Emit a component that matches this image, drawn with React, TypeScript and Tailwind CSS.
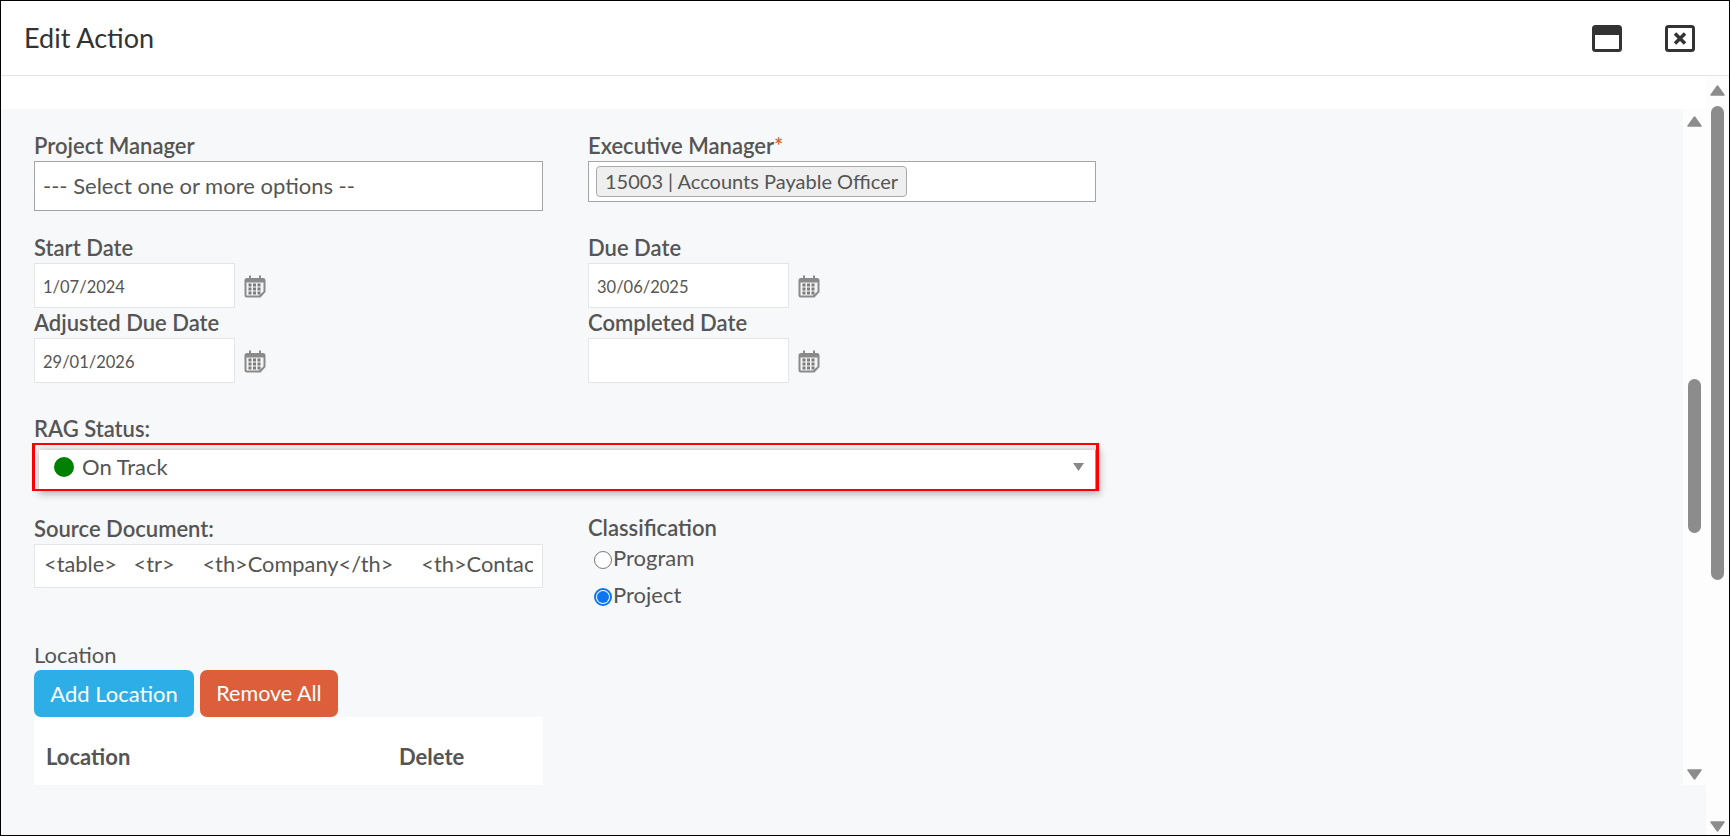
import React from "react";

const labelClass = "block h-[22px] leading-[22px] text-[22px] font-semibold text-[#555]";

const CalendarIcon = () => (
  <svg width="22" height="23" viewBox="0 0 22 23" className="ml-[9px] mt-[2px] shrink-0">
    <path d="M3 3h16a2.500 2.500 0 0 1 2.500 2.500V17l-5 5.500H3A2.500 2.500 0 0 1 .5 20V5.500A2.500 2.500 0 0 1 3 3z" fill="#8a8a8a" />
    <rect x="5" y="0.5" width="2" height="4" fill="#8a8a8a" />
    <rect x="15" y="0.5" width="2" height="4" fill="#8a8a8a" />
    <path d="M2.500 7.500h17v9l-4.500 4h-12.500z" fill="#f4f4f4" />
    {[9, 13, 17].map((y) =>
      [4.5, 9, 13.5].map((x) => <rect key={`${x}-${y}`} x={x} y={y - 0.5} width="3" height="3" fill="#7c7c7c" />)
    )}
  </svg>
);

const ScrollUp = () => (
  <svg width="15" height="11" viewBox="0 0 15 11">
    <path d="M7.500 1L14 10H1z" fill="#8c8c8c" stroke="#8c8c8c" strokeWidth="1.500" strokeLinejoin="round" />
  </svg>
);

const ScrollDown = () => (
  <svg width="15" height="11" viewBox="0 0 15 11">
    <path d="M7.500 10L14 1H1z" fill="#8c8c8c" stroke="#8c8c8c" strokeWidth="1.500" strokeLinejoin="round" />
  </svg>
);

const DateField = ({ label, value }: { label: string; value?: string }) => (
  <div>
    <label className={labelClass}>{label}</label>
    <div className="mt-[4px] flex items-center">
      <div className="h-[45px] w-[201px] border border-[#e3e5e8] bg-white pl-[8px] text-[16.500px] leading-[46px] text-[#555]">
        {value}
      </div>
      <CalendarIcon />
    </div>
  </div>
);

const Radio = ({ label, checked }: { label: string; checked?: boolean }) => (
  <div className="flex h-[19px] items-center pl-[6px] text-[22px] text-[#555]">
    {checked ? (
      <span className="flex h-[18px] w-[18px] items-center justify-center rounded-full border-2 border-[#0b74f0] bg-white">
        <span className="h-[12px] w-[12px] rounded-full bg-[#0b74f0]" />
      </span>
    ) : (
      <span className="h-[18px] w-[18px] rounded-full border border-[#777] bg-white" />
    )}
    <span className="-mt-[4px] ml-px">{label}</span>
  </div>
);

export default function App() {
  return (
    <div className="flex h-[836px] w-[1730px] flex-col overflow-hidden border border-black bg-white font-['Lato',sans-serif]">
      <div className="flex h-[75px] shrink-0 items-center justify-between border-b border-[#e4e4e4] pl-[23px] pr-[34px]">
        <h1 className="text-[27px] font-normal text-[#333]">Edit Action</h1>
        <div className="flex items-center gap-[43px]">
          <svg width="30" height="27" viewBox="0 0 30 27">
            <rect x="1.500" y="1.500" width="27" height="24" rx="2" fill="#fff" stroke="#333" strokeWidth="3" />
            <rect x="1" y="1" width="28" height="9" rx="2" fill="#333" />
          </svg>
          <svg width="30" height="27" viewBox="0 0 30 27">
            <rect x="1.500" y="1.500" width="27" height="24" rx="2" fill="#fff" stroke="#333" strokeWidth="3" />
            <path d="M10 8.500l10 10M20 8.500l-10 10" stroke="#333" strokeWidth="3.500" />
          </svg>
        </div>
      </div>

      <div className="flex min-h-0 flex-1">
        <div className="flex min-w-0 flex-1 flex-col">
          <div className="h-[33px] shrink-0 bg-white" />
          <div className="flex-1 bg-[#f7f8fa]">
            <div className="flex h-[676px]">
              <div className="min-w-0 flex-1 overflow-hidden pl-[33px] pt-[26px]">
                <div className="flex gap-[45px]">
                  <div className="w-[509px]">
                    <label className={labelClass}>Project Manager</label>
                    <div className="mt-[4px] h-[50px] border border-[#a5a5a5] bg-white pl-[8px] text-[22px] leading-[48px] text-[#555]">
                      --- Select one or more options --
                    </div>
                  </div>
                  <div className="w-[508px]">
                    <label className={labelClass}>
                      Executive Manager<span className="text-[#dc5e3a]">*</span>
                    </label>
                    <div className="mt-[4px] flex h-[41px] items-center border border-[#a5a5a5] bg-white pl-[7px]">
                      <span className="flex h-[31px] items-center rounded-[4px] border border-[#aaa] bg-[#efefef] px-[8px] pb-[2px] text-[20px] text-[#555]">
                        15003 | Accounts Payable Officer
                      </span>
                    </div>
                  </div>
                </div>

                <div className="mt-[26px] flex gap-[45px]">
                  <div className="w-[509px]">
                    <DateField label="Start Date" value="1/07/2024" />
                  </div>
                  <DateField label="Due Date" value="30/06/2025" />
                </div>

                <div className="mt-[4px] flex gap-[45px]">
                  <div className="w-[509px]">
                    <DateField label="Adjusted Due Date" value="29/01/2026" />
                  </div>
                  <DateField label="Completed Date" />
                </div>

                <div className="mt-[35px]">
                  <label className={labelClass}>RAG Status:</label>
                  <div className="relative -ml-[2px] mt-[3px] h-[48px] w-[1067px] pb-[1px] pl-[7px] pr-[3px] pt-[7px]">
                    <div className="flex h-full w-full items-center justify-between border-r border-[#999] bg-white pb-[7px] pl-[15px] pr-[11px] shadow-[2px_2px_7px_2px_#b0b2b4]">
                      <div className="flex items-center text-[22px] text-[#555]">
                        <span className="h-[20px] w-[20px] rounded-full bg-[#008000]" />
                        <span className="ml-[8px]">On Track</span>
                      </div>
                      <svg width="11" height="8" viewBox="0 0 11 8">
                        <path d="M0 0h11L5.500 8z" fill="#888" />
                      </svg>
                    </div>
                    <div className="absolute inset-0 border-x-[3px] border-y-2 border-[#ff0000]" />
                  </div>
                </div>

                <div className="mt-[27px] flex gap-[45px]">
                  <div className="w-[509px]">
                    <label className={labelClass}>Source Document:</label>
                    <div className="mt-[4px] h-[44px] overflow-hidden border border-[#e3e5e8] bg-white pl-[9px] pr-[9px] text-[21.800px] leading-[38px] text-[#555]">
                      <div className="overflow-hidden whitespace-pre">{"<table>   <tr>     <th>Company</th>     <th>Contact</th>"}</div>
                    </div>
                  </div>
                  <div className="-mt-px">
                    <label className={labelClass}>Classification</label>
                    <div className="mt-[11px]">
                      <Radio label="Program" />
                    </div>
                    <div className="mt-[18px]">
                      <Radio label="Project" checked />
                    </div>
                  </div>
                </div>

                <div className="mt-[38px] w-[509px]">
                  <label className="block h-[22px] text-[22px] leading-[22px] text-[#555]">Location</label>
                  <div className="mt-[4px] flex gap-[6px]">
                    <button className="h-[47px] w-[160px] rounded-[7px] bg-[#2eaee6] text-[22px] text-white">Add Location</button>
                    <button className="h-[47px] w-[138px] rounded-[7px] bg-[#dc5e3a] text-[21.500px] text-white">Remove All</button>
                  </div>
                  <div className="flex h-[68px] items-center bg-white pt-[11px] text-[22px] font-bold text-[#555]">
                    <span className="ml-[12px] w-[353px]">Location</span>
                    <span>Delete</span>
                  </div>
                </div>
              </div>

              <div className="relative flex w-[23px] shrink-0 flex-col items-center justify-between bg-[#fdfdfd] pb-[5px] pt-[7px]">
                <ScrollUp />
                <ScrollDown />
                <div className="absolute left-[5px] top-[270px] h-[154px] w-[13px] rounded-full bg-[#8c8c8c]" />
              </div>
            </div>
          </div>
        </div>

        <div className="relative flex w-[23px] shrink-0 flex-col items-center justify-between bg-[#fdfdfd] pb-[3px] pt-[9px]">
          <ScrollUp />
          <ScrollDown />
          <div className="absolute left-[5px] top-[30px] h-[474px] w-[13px] rounded-full bg-[#8c8c8c]" />
        </div>
      </div>
    </div>
  );
}
